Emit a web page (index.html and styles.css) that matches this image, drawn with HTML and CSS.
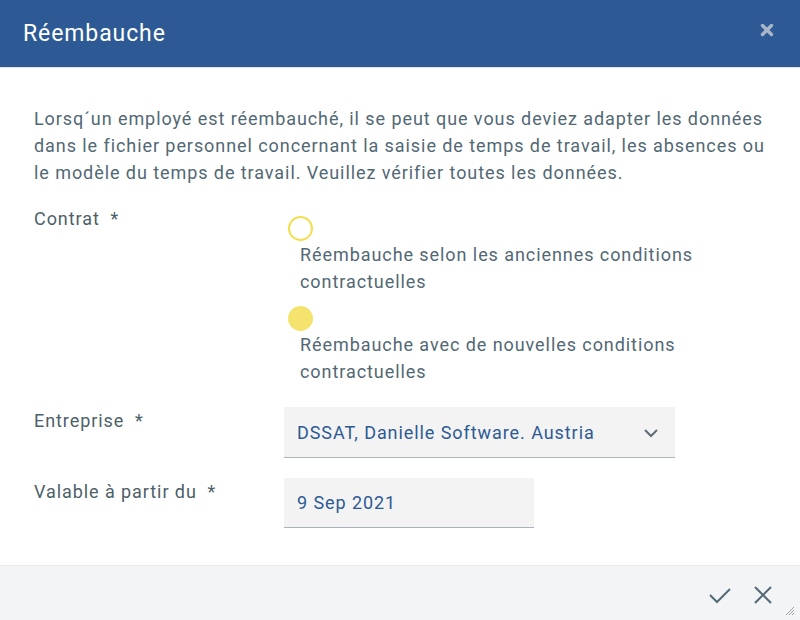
FILE: index.html
```html
<!DOCTYPE html>
<html lang="fr">
<head>
<meta charset="utf-8">
<title>Réembauche</title>
<link rel="stylesheet" href="styles.css">
</head>
<body>
<div class="dialog">
  <header class="head">
    <h1 class="title">Réembauche</h1>
    <button class="close" aria-label="Fermer">
      <svg width="14" height="14" viewBox="0 0 14 14"><path d="M2.5 2.5 L11.5 11.5 M11.5 2.5 L2.5 11.5" stroke="#a9b6c8" stroke-width="3.4" stroke-linecap="round"/></svg>
    </button>
  </header>
  <main class="body">
    <p class="intro">Lorsq´un employé est réembauché, il se peut que vous deviez adapter les données dans le fichier personnel concernant la saisie de temps de travail, les absences ou le modèle du temps de travail. Veuillez vérifier toutes les données.</p>
    <div class="row row-contract">
      <div class="label">Contrat&nbsp; *</div>
      <div class="field radios">
        <div class="radio">
          <span class="dot"></span>
          <span class="rtext">Réembauche selon les anciennes conditions contractuelles</span>
        </div>
        <div class="radio">
          <span class="dot on"></span>
          <span class="rtext">Réembauche avec de nouvelles conditions contractuelles</span>
        </div>
      </div>
    </div>
    <div class="row row-company">
      <div class="label">Entreprise&nbsp; *</div>
      <div class="field">
        <div class="select">
          <span>DSSAT, Danielle Software. Austria</span>
          <svg width="16" height="10" viewBox="0 0 16 10"><path d="M2 2 L8 8 L14 2" fill="none" stroke="#5b6d79" stroke-width="2"/></svg>
        </div>
      </div>
    </div>
    <div class="row row-date">
      <div class="label">Valable à partir du&nbsp; *</div>
      <div class="field">
        <div class="date">9 Sep 2021</div>
      </div>
    </div>
  </main>
  <footer class="foot">
    <button class="act" aria-label="OK">
      <svg width="24" height="24" viewBox="0 0 24 24"><path d="M2 12 L9 19 L22 6" fill="none" stroke="#546a78" stroke-width="2"/></svg>
    </button>
    <button class="act" aria-label="Annuler">
      <svg width="24" height="24" viewBox="0 0 24 24"><path d="M4 4 L20 20 M20 4 L4 20" fill="none" stroke="#546a78" stroke-width="2"/></svg>
    </button>
    <svg class="grip" width="12" height="12" viewBox="0 0 12 12"><path d="M11 3 L3 11 M11 6 L6 11 M11 9 L9 11" stroke="#9aa3ab" stroke-width="1"/></svg>
  </footer>
</div>
</body>
</html>
```

FILE: styles.css
```css
* { box-sizing: border-box; }
html, body { margin: 0; padding: 0; }
body {
  width: 800px;
  height: 620px;
  font-family: Roboto, "Liberation Sans", sans-serif;
  background: #fff;
  overflow: hidden;
}
.dialog {
  width: 800px;
  height: 620px;
  display: flex;
  flex-direction: column;
  position: relative;
}
.head {
  height: 68px;
  background: #2d5a94;
  border-bottom: 1px solid #dfe4ea;
  display: flex;
  align-items: center;
  justify-content: space-between;
  padding: 0 26px 0 23px;
  flex: none;
}
.title {
  margin: 0;
  color: #fff;
  font-weight: 400;
  font-size: 23px;
  letter-spacing: 0.9px;
}
.close {
  background: none;
  border: 0;
  padding: 0;
  width: 14px;
  height: 14px;
  margin-top: -8px;
  display: flex;
}
.body {
  flex: 1;
  padding: 37px 26px 0 34px;
  color: #526874;
  font-size: 18px;
  line-height: 27px;
  letter-spacing: 0.93px;
}
.intro {
  margin: 0 0 17px 0;
}
.row {
  display: flex;
}
.label {
  width: 250px;
  flex: none;
  color: #4d5f69;
}
.row-contract .label { padding-top: 2px; }
.radios {
  display: flex;
  flex-direction: column;
  padding-top: 13px;
}
.radio {
  display: flex;
  flex-direction: column;
  margin-bottom: 11px;
}
.radio:last-child { margin-bottom: 9px; }
.dot {
  width: 25px;
  height: 25px;
  border-radius: 50%;
  border: 2px solid #f2df50;
  margin-left: 4px;
  margin-bottom: 0;
}
.dot.on {
  background: #f4e36c;
  border-color: #f4e36c;
}
.rtext {
  padding-left: 16px;
  width: 430px;
}
.row-company { margin-top: 13px; }
.row-company .label { padding-top: 0; }
.select {
  width: 391px;
  height: 51px;
  background: #f3f3f3;
  border-bottom: 1px solid #aab3bb;
  display: flex;
  align-items: center;
  justify-content: space-between;
  padding: 0 16px 0 13px;
  color: #2d5a94;
}
.select svg { margin-top: 2px; }
.row-date { margin-top: 20px; }
.date {
  width: 250px;
  height: 50px;
  background: #f3f3f3;
  border-bottom: 1px solid #aab3bb;
  display: flex;
  align-items: center;
  padding: 0 13px;
  color: #2d5a94;
}
.foot {
  height: 55px;
  flex: none;
  background: #f3f4f6;
  border-top: 1px solid #e8eaed;
  display: flex;
  align-items: center;
  justify-content: flex-end;
  padding: 4px 25px 0 0;
  gap: 19px;
  position: relative;
}
.act {
  background: none;
  border: 0;
  padding: 0;
  width: 24px;
  height: 24px;
  display: flex;
}
.grip {
  position: absolute;
  right: 5px;
  bottom: 4px;
}
```
